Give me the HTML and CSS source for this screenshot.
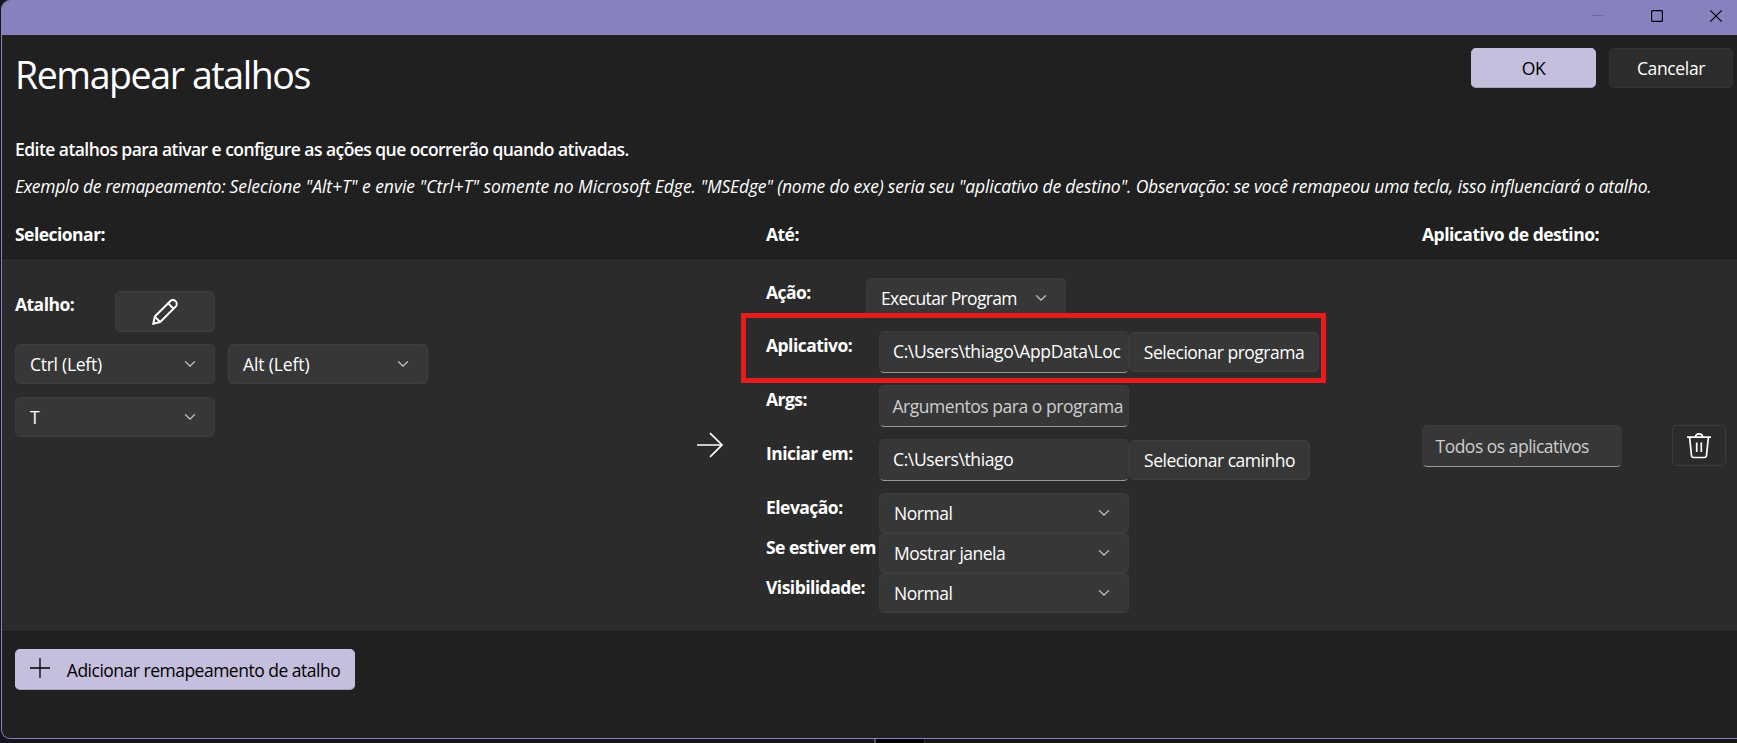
FILE: index.html
```html
<!DOCTYPE html>
<html lang="pt-BR">
<head>
<meta charset="utf-8">
<title>Remapear atalhos</title>
<link rel="stylesheet" href="styles.css">
</head>
<body>
<svg class="defs" width="0" height="0" aria-hidden="true">
  <symbol id="chevron" viewBox="0 0 12 8"><path d="M1.2 1.4 6 6.2l4.800-4.800" fill="none" stroke="currentColor" stroke-width="1.3"/></symbol>
</svg>
<div class="window">
  <header class="titlebar">
    <svg class="caption caption-off" viewBox="0 0 12 12"><path d="M0 5.500h12" /></svg>
    <svg class="caption" viewBox="0 0 12 12"><rect x=".6" y=".6" width="10.800" height="10.800" rx="1"/></svg>
    <svg class="caption" viewBox="0 0 12 12"><path d="M.3.3l11.400 11.400M11.700.3.3 11.700"/></svg>
  </header>
  <div class="top">
    <h1>Remapear atalhos</h1>
    <div class="actions">
      <button class="btn accent ok">OK</button>
      <button class="btn dim cancel">Cancelar</button>
    </div>
  </div>
  <p class="lead">Edite atalhos para ativar e configure as ações que ocorrerão quando ativadas.</p>
  <p class="example"><span class="ex-a">Exemplo de remapeamento: </span><span class="ex-b">Selecione "Alt+T" e envie "Ctrl+T" somente no Microsoft Edge. </span><span class="ex-c">"MSEdge" (nome do exe) seria seu "aplicativo de destino". </span><span class="ex-d">Observação: se você remapeou uma tecla, isso influenciará o atalho.</span></p>
  <div class="columns heads">
    <span class="head">Selecionar:</span>
    <span></span>
    <span class="head">Até:</span>
    <span class="head t-target">Aplicativo de destino:</span>
  </div>
  <section class="columns mapping">
    <div class="keys">
      <div class="key-head">
        <span class="label">Atalho:</span>
        <button class="btn edit" aria-label="Editar"><svg viewBox="0 0 26 26"><path d="M1.300 24.700l1.500-7.100L18.200 2.200a3.700 3.700 0 0 1 5.400 5.400L8.200 23zM2.800 17.600 8.200 23M16.200 4.400l5.400 5.400"/></svg></button>
      </div>
      <div class="key-list">
        <button class="combo"><span class="t-ctrl">Ctrl (Left)</span><svg class="chev"><use href="#chevron"/></svg></button>
        <button class="combo"><span class="t-alt">Alt (Left)</span><svg class="chev"><use href="#chevron"/></svg></button>
        <button class="combo"><span>T</span><svg class="chev"><use href="#chevron"/></svg></button>
      </div>
    </div>
    <svg class="arrow" viewBox="0 0 26 26"><path d="M0 13h25M13 1.200 25 13 13 24.800"/></svg>
    <div class="form">
      <div class="field action">
        <span class="label">Ação:</span>
        <button class="combo"><span class="t-exec">Executar Program</span><svg class="chev"><use href="#chevron"/></svg></button>
      </div>
      <div class="field tall">
        <span class="label">Aplicativo:</span>
        <div class="input">C:\Users\thiago\AppData\Loc</div>
        <button class="btn pick">Selecionar programa</button>
      </div>
      <div class="field tall">
        <span class="label">Args:</span>
        <div class="input hint">Argumentos para o programa</div>
      </div>
      <div class="field tall">
        <span class="label">Iniciar em:</span>
        <div class="input">C:\Users\thiago</div>
        <button class="btn pick path">Selecionar caminho</button>
      </div>
      <div class="field">
        <span class="label">Elevação:</span>
        <button class="combo wide"><span>Normal</span><svg class="chev"><use href="#chevron"/></svg></button>
      </div>
      <div class="field">
        <span class="label">Se estiver em</span>
        <button class="combo wide"><span class="t-show">Mostrar janela</span><svg class="chev"><use href="#chevron"/></svg></button>
      </div>
      <div class="field">
        <span class="label">Visibilidade:</span>
        <button class="combo wide"><span>Normal</span><svg class="chev"><use href="#chevron"/></svg></button>
      </div>
      <div class="highlight"></div>
    </div>
    <div class="target">
      <div class="input hint">Todos os aplicativos</div>
      <button class="btn remove" aria-label="Excluir"><svg viewBox="0 0 24 26"><path d="M0 4.200h24M8.500 4C8.500-.2 15.500-.2 15.500 4M2.600 4.200l1.900 18.300q.2 2 2.200 2h10.600q2 0 2.200-2l1.900-18.300M9.700 9.500v9.500M14.300 9.500v9.500"/></svg></button>
    </div>
  </section>
  <button class="btn accent add"><svg viewBox="0 0 20 20"><path d="M0 10h20M10 0v20"/></svg><span>Adicionar remapeamento de atalho</span></button>
</div>
</body>
</html>
```
FILE: styles.css
```css
* { box-sizing: border-box; }
body {
  margin: 0;
  width: 1737px;
  height: 743px;
  overflow: hidden;
  background: linear-gradient(90deg, #15131e 0 874px, #5b4970 874px 876px, #020107 876px 924px, #33283b 924px 925px, #171118 925px);
  color: #fff;
  font: 17.5px/24px "Open Sans", "Noto Sans", sans-serif;
}
.defs { position: absolute; }
.window {
  width: 1746px;
  height: 739px;
  margin-left: 1px;
  border: 1px solid #8781bd;
  border-top: 0;
  border-radius: 9px;
  background: #202020;
  overflow: hidden;
}
.titlebar {
  height: 35px;
  margin-left: -1px;
  padding: 10px 24px 0 0;
  display: flex;
  justify-content: flex-end;
  gap: 47px;
  background: #8781bd;
}
.caption { width: 12px; height: 12px; fill: none; stroke: #000; stroke-width: 1.200; overflow: visible; }
.caption-off { stroke: #716c9e; }
h1, p { margin: 0; }
.top { display: flex; justify-content: space-between; height: 86px; padding: 13px 13px 0 13px; }
h1 { font-size: 37.5px; line-height: 54px; font-weight: 400; letter-spacing: -1.42px; }
.actions { display: flex; gap: 13px; }
button {
  appearance: none;
  margin: 0;
  padding: 0;
  font: inherit;
  letter-spacing: -.45px;
  color: #fff;
  background: #373737;
  border: 1px solid #3d3d3d;
  border-radius: 5px;
  white-space: nowrap;
}
.btn { display: flex; align-items: center; justify-content: center; height: 40px; flex: none; }
.btn svg { fill: none; stroke: currentColor; }
.accent { background: #c6bedd; color: #000; border-color: #c9c2df #c6bedd #a9a2be; }
.ok { width: 125px; }
.cancel { width: 124px; letter-spacing: -.35px; }
.dim { background: #2d2d2d; border-color: #333; }
.lead { padding: 16px 13px 0; font-weight: 600; letter-spacing: -.55px; }
.example { padding: 13px 13px 0; font-style: italic; white-space: nowrap; }
.ex-a { letter-spacing: -.293px; }
.ex-b { letter-spacing: -.025px; }
.ex-c { letter-spacing: -.19px; }
.ex-d { letter-spacing: -.2px; }
.columns { display: grid; grid-template-columns: 682px 69px 656px 1fr; padding-left: 13px; }
.heads { height: 60px; padding-top: 24px; }
.head, .label { font-weight: 700; white-space: nowrap; letter-spacing: -.53px; }
.t-target { letter-spacing: -.5px; }
.mapping { height: 374px; background: #2b2b2b; border-top: 1px solid #1d1d1d; border-bottom: 1px solid #1d1d1d; }
.keys { padding-top: 32px; }
.key-head { display: flex; height: 53px; }
.key-head .label { width: 100px; padding-top: 1px; }
.edit { width: 100px; height: 41px; }
.edit svg { width: 26px; height: 26px; stroke-width: 2; }
.key-list { display: flex; flex-wrap: wrap; gap: 13px; width: 420px; }
.combo { display: flex; align-items: center; justify-content: space-between; width: 200px; height: 40px; padding: 0 18px 0 14px; }
.chev { width: 12px; height: 8px; color: #ccc; }
.t-ctrl { letter-spacing: -.27px; }
.t-alt { letter-spacing: -.12px; }
.t-exec { letter-spacing: -.65px; }
.arrow { width: 26px; height: 26px; align-self: center; margin: 0; fill: none; stroke: #fff; stroke-width: 1.700; }
.form { position: relative; padding-top: 19px; }
.field { display: flex; height: 40px; }
.field .label { width: 113px; padding-top: 2px; flex: none; }
.field.action { height: 53px; }
.field.action .label { width: 100px; }
.field.tall { height: 54px; }
.wide { width: 250px; }
.wide span { letter-spacing: -.45px; }
.wide .t-show { letter-spacing: -.5px; }
.input {
  width: 250px;
  height: 42px;
  padding: 6.5px 0 0 13px;
  background: #373737;
  border: 1px solid #3a3a3a;
  border-bottom-color: #9a9a9a;
  border-radius: 5px;
  white-space: nowrap;
  overflow: hidden;
  letter-spacing: -.38px;
}
.hint { padding-top: 8px; padding-left: 12.5px; color: #cecece; letter-spacing: -.46px; }
.pick { width: 190px; margin-top: 1px; letter-spacing: -.5px; }
.path { width: 181px; }
.highlight { position: absolute; left: -25px; top: 54px; width: 585px; height: 70px; border: 5px solid #e81b1b; }
.target { display: flex; align-items: center; gap: 50px; padding-top: 1px; }
.target .input { width: 200px; letter-spacing: -.5px; }
.remove { width: 54px; height: 41px; background: transparent; border-color: #3d3d3d; }
.remove svg { width: 24px; height: 26px; stroke-width: 1.700; }
.add { width: 340px; height: 41px; margin: 17px 0 0 13px; gap: 17px; letter-spacing: -.5px; }
.add svg { width: 20px; height: 20px; margin-bottom: 4px; stroke-width: 1.300; }
```
